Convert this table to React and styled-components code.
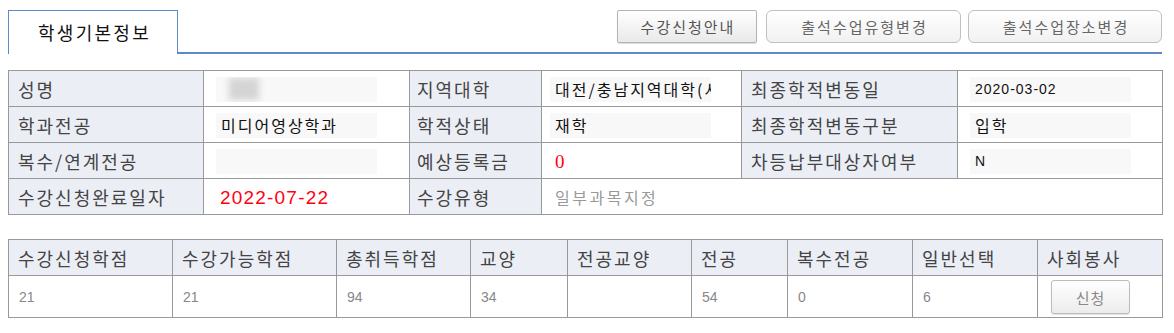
import React from "react";
import styled, { createGlobalStyle } from "styled-components";

const GlobalStyle = createGlobalStyle`
  body {
    margin: 0;
    background: #fff;
    font-family: "Noto Sans CJK KR", "Noto Sans", sans-serif;
    color: #333;
  }
  * {
    box-sizing: border-box;
  }
`;

const Page = styled.div`
  width: 1162px;
  padding: 10px 0 0 8px;
`;

const TopBar = styled.div`
  display: flex;
  align-items: flex-start;
  justify-content: space-between;
  border-bottom: 2px solid #5d8ac4;
  height: 44px;
`;

const Tab = styled.div`
  width: 170px;
  height: 44px;
  border: 1px solid #5d8ac4;
  border-bottom: none;
  background: #fff;
  display: flex;
  align-items: center;
  justify-content: center;
  font-size: 18px;
  letter-spacing: 2.3px;
  color: #111;
  margin-bottom: -2px;
  padding: 0 0 2px 3px;
`;

const Buttons = styled.div`
  display: flex;
  align-items: center;
`;

const Button = styled.button`
  height: 33px;
  width: ${(p) => p.$w}px;
  margin-left: ${(p) => p.$ml || 0}px;
  border: 1px solid ${(p) => (p.$square ? "#b4b4b4" : "#c0c0c0")};
  border-radius: ${(p) => (p.$square ? 2 : 6)}px;
  background: ${(p) =>
    p.$square
      ? "linear-gradient(#ffffff, #e9e9e9)"
      : "linear-gradient(#ffffff, #f1f1f1)"};
  box-shadow: ${(p) => (p.$square ? "0 1px 1px rgba(0,0,0,0.15)" : "none")};
  font-family: "Noto Sans CJK KR", sans-serif;
  font-size: 15px;
  letter-spacing: 2px;
  color: ${(p) => (p.$square ? "#555" : "#666")};
  cursor: pointer;
  padding: 0 0 0 2px;
`;

const InfoTable = styled.table`
  margin-top: 16px;
  width: 1154px;
  table-layout: fixed;
  border-collapse: collapse;
`;

const Label = styled.th`
  height: 36px;
  background: #eceef6;
  border: 1px solid #999;
  text-align: left;
  font-weight: 400;
  font-size: 18px;
  letter-spacing: 2px;
  color: #444;
  padding: 0 0 0 ${(p) => p.$pl || 9}px;
  white-space: nowrap;
`;

const Cell = styled.td`
  height: 36px;
  border: 1px solid #999;
  padding: 0 0 0 ${(p) => p.$pl || 12}px;
  vertical-align: middle;
`;

const Field = styled.div`
  width: 161px;
  height: 25px;
  margin-top: 1px;
  background: #f8f8f8;
  padding: 0 5px;
  display: flex;
  align-items: center;
  overflow: hidden;
  white-space: nowrap;
  font-size: ${(p) => p.$size || 16}px;
  font-family: ${(p) =>
    p.$latin ? '"Liberation Sans", sans-serif' : '"Noto Sans CJK KR", sans-serif'};
  letter-spacing: ${(p) => (p.$latin ? 1 : 2)}px;
  color: #111;
`;

const Blurred = styled.span`
  display: inline-block;
  width: 30px;
  height: 22px;
  margin-left: 8px;
  background: #d4d4d4;
  filter: blur(3px);
`;

const RedDate = styled.span`
  font-family: "Liberation Sans", Arial, sans-serif;
  font-size: 19px;
  letter-spacing: 1.2px;
  color: #ff0010;
  padding-left: 4px;
`;

const RedZero = styled.span`
  font-family: "Liberation Serif", serif;
  font-size: 19px;
  color: #ff0010;
  padding-left: 1px;
`;

const Muted = styled.span`
  font-size: 16px;
  letter-spacing: 2.5px;
  color: #999;
  padding-left: 1px;
`;

const StatsTable = styled.table`
  margin-top: 24px;
  width: 1154px;
  table-layout: fixed;
  border-collapse: collapse;
`;

const Head = styled.th`
  height: 36px;
  background: #eceef6;
  border: 1px solid #999;
  text-align: left;
  font-weight: 400;
  font-size: 18px;
  letter-spacing: 2px;
  color: #444;
  padding: 0 0 0 9px;
  white-space: nowrap;
`;

const Num = styled.td`
  height: 42px;
  border: 1px solid #999;
  padding: 0 0 0 10px;
  font-family: "Liberation Sans", sans-serif;
  font-size: 14px;
  color: #888;
`;

const SmallButton = styled.button`
  width: 79px;
  height: 34px;
  margin-left: 3px;
  margin-top: 1px;
  border: 1px solid #bcbcbc;
  border-radius: 3px;
  background: linear-gradient(#ffffff, #ececec);
  box-shadow: 0 1px 1px rgba(0, 0, 0, 0.12);
  font-family: "Noto Sans CJK KR", sans-serif;
  font-size: 15px;
  letter-spacing: 1px;
  color: #888;
  cursor: pointer;
`;

const infoCols = [195, 206, 132, 200, 216, 205];
const statCols = [164, 164, 134, 97, 124, 96, 125, 125, 125];

const stats = [
  ["수강신청학점", "21"],
  ["수강가능학점", "21"],
  ["총취득학점", "94"],
  ["교양", "34"],
  ["전공교양", ""],
  ["전공", "54"],
  ["복수전공", "0"],
  ["일반선택", "6"],
  ["사회봉사", null],
];

export default function App() {
  return (
    <Page>
      <GlobalStyle />
      <TopBar>
        <Tab>학생기본정보</Tab>
        <Buttons>
          <Button $square $w={140}>수강신청안내</Button>
          <Button $w={195} $ml={9}>출석수업유형변경</Button>
          <Button $w={194} $ml={7}>출석수업장소변경</Button>
        </Buttons>
      </TopBar>

      <InfoTable>
        <colgroup>
          {infoCols.map((w, i) => (
            <col key={i} style={{ width: w }} />
          ))}
        </colgroup>
        <tbody>
          <tr>
            <Label>성명</Label>
            <Cell>
              <Field>
                <Blurred />
              </Field>
            </Cell>
            <Label $pl={7}>지역대학</Label>
            <Cell $pl={8}>
              <Field>대전/충남지역대학(서울)</Field>
            </Cell>
            <Label>최종학적변동일</Label>
            <Cell>
              <Field $latin $size={14}>2020-03-02</Field>
            </Cell>
          </tr>
          <tr>
            <Label>학과전공</Label>
            <Cell>
              <Field>미디어영상학과</Field>
            </Cell>
            <Label $pl={7}>학적상태</Label>
            <Cell $pl={8}>
              <Field>재학</Field>
            </Cell>
            <Label>최종학적변동구분</Label>
            <Cell>
              <Field>입학</Field>
            </Cell>
          </tr>
          <tr>
            <Label>복수/연계전공</Label>
            <Cell>
              <Field />
            </Cell>
            <Label $pl={7}>예상등록금</Label>
            <Cell $pl={12}>
              <RedZero>0</RedZero>
            </Cell>
            <Label>차등납부대상자여부</Label>
            <Cell>
              <Field $latin $size={14}>N</Field>
            </Cell>
          </tr>
          <tr>
            <Label>수강신청완료일자</Label>
            <Cell>
              <RedDate>2022-07-22</RedDate>
            </Cell>
            <Label $pl={7}>수강유형</Label>
            <Cell $pl={12} colSpan={3}>
              <Muted>일부과목지정</Muted>
            </Cell>
          </tr>
        </tbody>
      </InfoTable>

      <StatsTable>
        <colgroup>
          {statCols.map((w, i) => (
            <col key={i} style={{ width: w }} />
          ))}
        </colgroup>
        <thead>
          <tr>
            {stats.map(([title]) => (
              <Head key={title}>{title}</Head>
            ))}
          </tr>
        </thead>
        <tbody>
          <tr>
            {stats.map(([title, value]) => (
              <Num key={title}>
                {value === null ? <SmallButton>신청</SmallButton> : value}
              </Num>
            ))}
          </tr>
        </tbody>
      </StatsTable>
    </Page>
  );
}
